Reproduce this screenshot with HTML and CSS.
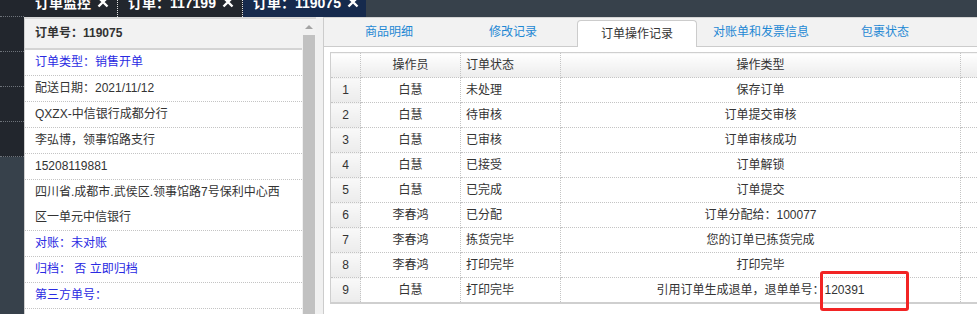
FILE: index.html
```html
<!DOCTYPE html>
<html lang="zh-CN">
<head>
    <meta charset="UTF-8">
    <meta name="viewport" content="width=device-width, initial-scale=1.0">
    <title>订单：119075</title>
    <link rel="stylesheet" href="styles.css">
</head>
<body>
    <div class="app">
        <!-- Left menu strip -->
        <aside class="sidebar">
            <div class="side-item first"></div>
            <div class="side-item"></div>
            <div class="side-item"></div>
            <div class="side-item"></div>
            <div class="side-item"></div>
        </aside>

        <div class="main">
            <!-- Open pages -->
            <div class="topbar">
                <div class="page-tab tab-monitor">订单监控<svg class="close" viewBox="0 0 12 12"><path d="M1.5 1.5l9 9M10.5 1.5l-9 9"/></svg></div>
                <div class="page-tab tab-old">订单：117199<svg class="close" viewBox="0 0 12 12"><path d="M1.5 1.5l9 9M10.5 1.5l-9 9"/></svg></div>
                <div class="page-tab tab-current">订单：119075<svg class="close" viewBox="0 0 12 12"><path d="M1.5 1.5l9 9M10.5 1.5l-9 9"/></svg></div>
            </div>

            <div class="content">
                <!-- Order summary -->
                <section class="info-pane">
                    <div class="info-list">
                        <div class="info-head">订单号：119075</div>
                        <div class="info-row link">订单类型：销售开单</div>
                        <div class="info-row">配送日期：2021/11/12</div>
                        <div class="info-row">QXZX-中信银行成都分行</div>
                        <div class="info-row">李弘博，领事馆路支行</div>
                        <div class="info-row">15208119881</div>
                        <div class="info-row">四川省.成都市.武侯区.领事馆路7号保利中心西区一单元中信银行</div>
                        <div class="info-row link">对账：未对账</div>
                        <div class="info-row link">归档： 否 立即归档</div>
                        <div class="info-row link">第三方单号：</div>
                    </div>
                    <div class="scrollbar">
                        <span class="arrow"></span>
                        <span class="thumb"></span>
                    </div>
                </section>

                <!-- Order details -->
                <section class="detail-pane">
                    <ul class="detail-tabs">
                        <li>商品明细</li>
                        <li>修改记录</li>
                        <li class="active">订单操作记录</li>
                        <li>对账单和发票信息</li>
                        <li>包裹状态</li>
                    </ul>
                    <div class="detail-body">
                        <table class="grid">
                            <colgroup>
                                <col class="c-num">
                                <col class="c-user">
                                <col class="c-state">
                                <col class="c-type">
                                <col class="c-extra">
                            </colgroup>
                            <thead>
                                <tr><th></th><th>操作员</th><th class="left">订单状态</th><th>操作类型</th><th></th></tr>
                            </thead>
                            <tbody>
                                <tr><td class="num">1</td><td>白慧</td><td class="left">未处理</td><td>保存订单</td><td></td></tr>
                                <tr><td class="num">2</td><td>白慧</td><td class="left">待审核</td><td>订单提交审核</td><td></td></tr>
                                <tr><td class="num">3</td><td>白慧</td><td class="left">已审核</td><td>订单审核成功</td><td></td></tr>
                                <tr><td class="num">4</td><td>白慧</td><td class="left">已接受</td><td>订单解锁</td><td></td></tr>
                                <tr><td class="num">5</td><td>白慧</td><td class="left">已完成</td><td>订单提交</td><td></td></tr>
                                <tr><td class="num">6</td><td>李春鸿</td><td class="left">已分配</td><td>订单分配给：100077</td><td></td></tr>
                                <tr><td class="num">7</td><td>李春鸿</td><td class="left">拣货完毕</td><td>您的订单已拣货完成</td><td></td></tr>
                                <tr><td class="num">8</td><td>李春鸿</td><td class="left">打印完毕</td><td>打印完毕</td><td></td></tr>
                                <tr><td class="num">9</td><td>白慧</td><td class="left">打印完毕</td><td>引用订单生成退单，退单单号：120391</td><td></td></tr>
                            </tbody>
                        </table>
                        <span class="mark"></span>
                    </div>
                </section>
            </div>
        </div>
    </div>
</body>
</html>
```

FILE: styles.css
```css
/* General */
body {
    margin: 0;
    font-family: "Liberation Sans", "Noto Sans CJK SC", sans-serif;
    font-size: 12px;
    color: #333;
    background-color: #f0f0f0;
    overflow: hidden;
}

.app {
    display: flex;
    width: 977px;
    height: 314px;
    overflow: hidden;
}

/* Sidebar */
.sidebar {
    width: 24px;
    flex-shrink: 0;
    background-color: #37414b;
}

.side-item {
    height: 34px;
    background-color: #22262d;
    border-bottom: 1px dotted #6e737a;
}

.side-item.first {
    height: 16px;
}

.main {
    flex: 1;
    min-width: 0;
    display: flex;
    flex-direction: column;
}

.topbar {
    height: 17px;
    display: flex;
    background-color: #37414b;
    overflow: hidden;
    flex-shrink: 0;
}

.page-tab {
    display: flex;
    align-items: center;
    height: 17px;
    margin-top: -7px;
    padding-bottom: 7px;
    box-sizing: content-box;
    color: #fff;
    font-size: 14px;
    font-weight: bold;
    background-color: #22262d;
}

.page-tab .close {
    width: 12px;
    height: 12px;
    margin-left: 6px;
    fill: none;
    stroke: #fff;
    stroke-width: 2.4;
}

.tab-monitor {
    width: 82px;
    padding-left: 11px;
    border-right: 1px dotted #e0e0e0;
}

.tab-old {
    width: 114px;
    padding-left: 10px;
    border-right: 1px dotted #e0e0e0;
}

.tab-current {
    width: 113px;
    padding-left: 10px;
    background-color: #162a4d;
}

/* Content area */
.content {
    flex: 1;
    display: flex;
    gap: 7px;
    min-height: 0;
}

/* Order summary */
.info-pane {
    width: 291px;
    flex-shrink: 0;
    display: flex;
    background-color: #fff;
    border-top: 2px solid #d8d8d8;
    border-left: 1px solid #d0d0d0;
}

.info-list {
    flex: 1;
}

.info-head {
    height: 29px;
    line-height: 29px;
    padding-left: 10px;
    font-weight: bold;
    background-color: #f2f2f2;
    border-bottom: 2px solid #d4d4d4;
}

.info-row {
    line-height: 25px;
    padding: 0 12px 0 10px;
    border-bottom: 1px dotted #c4c4c4;
}

.info-row.link {
    color: #2a2ae2;
}

.scrollbar {
    width: 14px;
    display: flex;
    flex-direction: column;
    align-items: center;
    background-color: #f1f1f1;
}

.scrollbar .arrow {
    margin-top: 6px;
    border-left: 4px solid transparent;
    border-right: 4px solid transparent;
    border-bottom: 4px solid #a3a3a3;
}

.scrollbar .thumb {
    flex: 1;
    width: 12px;
    margin-top: 6px;
    background-color: #c1c1c1;
}

/* Order details */
.detail-pane {
    flex: 1;
    min-width: 0;
    position: relative;
    background-color: #fff;
    border-top: 1px solid #d4d4d4;
    border-left: 1px solid #cccccc;
    overflow: hidden;
}

.detail-tabs {
    display: flex;
    gap: 4px;
    height: 28px;
    margin: 0;
    padding: 0 0 0 5px;
    list-style: none;
    background-color: #f2f2f2;
    border-bottom: 1px solid #cccccc;
}

.detail-tabs li {
    width: 120px;
    line-height: 28px;
    text-align: center;
    color: #1e88d4;
}

.detail-tabs li.active {
    box-sizing: border-box;
    height: 27px;
    margin-top: 2px;
    line-height: 26px;
    color: #333;
    background-color: #fff;
    border: 1px solid #cccccc;
    border-bottom: none;
    border-radius: 4px 4px 0 0;
}

.detail-body {
    padding: 5px 0 0 6px;
}

.grid {
    border-collapse: collapse;
    table-layout: fixed;
    width: 670px;
    border-top: 1px solid #cfcfcf;
    border-left: 1px solid #cfcfcf;
    border-bottom: 2px solid #cfcfcf;
}

.c-num { width: 30px; }
.c-user { width: 100px; }
.c-state { width: 100px; }
.c-type { width: 400px; }
.c-extra { width: 40px; }

.grid th,
.grid td {
    height: 24px;
    padding: 0;
    line-height: 24px;
    text-align: center;
    white-space: nowrap;
    border: 1px dotted #c4c4c4;
}

.grid th {
    font-weight: normal;
    background: linear-gradient(#ffffff, #ececec);
}

.grid .left {
    text-align: left;
    padding-left: 5px;
}

.grid td.num {
    background: linear-gradient(#f9f9f9, #ebebeb);
}

/* Annotation box */
.mark {
    position: absolute;
    left: 496px;
    top: 253px;
    width: 83px;
    height: 34px;
    border: 3px solid #f22424;
    border-radius: 3px;
}
```
